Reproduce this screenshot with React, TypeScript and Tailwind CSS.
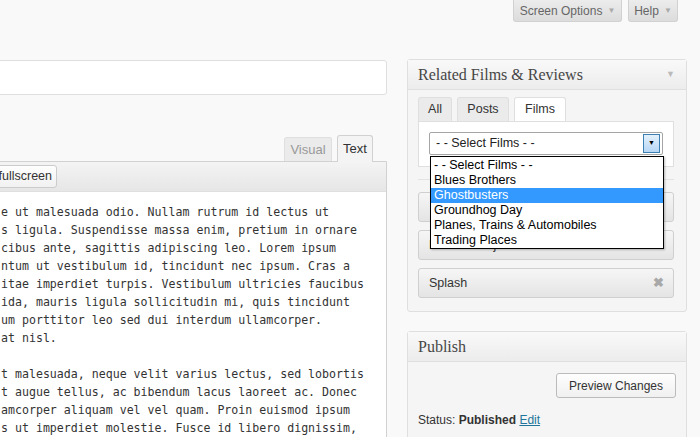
import type { ReactNode } from "react";

const bodyLines = [
  "e ut malesuada odio. Nullam rutrum id lectus ut",
  "s ligula. Suspendisse massa enim, pretium in ornare",
  "cibus ante, sagittis adipiscing leo. Lorem ipsum",
  "ntum ut vestibulum id, tincidunt nec ipsum. Cras a",
  "itae imperdiet turpis. Vestibulum ultricies faucibus",
  "ida, mauris ligula sollicitudin mi, quis tincidunt",
  "um porttitor leo sed dui interdum ullamcorper.",
  "at nisl.",
  "",
  "t malesuada, neque velit varius lectus, sed lobortis",
  "t augue tellus, ac bibendum lacus laoreet ac. Donec",
  "amcorper aliquam vel vel quam. Proin euismod ipsum",
  "s ut imperdiet molestie. Fusce id libero dignissim,",
];

const films = [
  "- - Select Films - -",
  "Blues Brothers",
  "Ghostbusters",
  "Groundhog Day",
  "Planes, Trains & Automobiles",
  "Trading Places",
];

function ScreenTab({ label, width }: { label: string; width: string }) {
  return (
    <button
      type="button"
      className={`flex h-[22px] ${width} items-center justify-center gap-[5px] rounded-b-[3px] border border-t-0 border-[#d1d1d1] bg-gradient-to-b from-[#ececec] to-[#dcdcdc] text-[12px] text-[#666]`}
    >
      {label}
      <span className="text-[8px] text-[#aaa]">▼</span>
    </button>
  );
}

function PanelHeader({ title, arrow }: { title: string; arrow?: boolean }) {
  return (
    <div className="flex h-[30px] items-center justify-between border-b border-[#dfdfdf] bg-gradient-to-b from-[#f9f9f9] to-[#ececec] pl-[10px] pr-[11px]">
      <h3 className="font-['Liberation_Serif',Georgia,serif] text-[16px] text-[#464646]">{title}</h3>
      {arrow && <span className="text-[9px] text-[#bbb]">▼</span>}
    </div>
  );
}

function RelatedItem({ label }: { label?: ReactNode }) {
  return (
    <div className="flex h-[30px] items-center justify-between rounded-[3px] border border-[#cfcfcf] bg-gradient-to-b from-[#f6f6f6] to-[#e4e4e4] pl-[10px] pr-[9px] text-[12.5px] text-[#333]">
      <span>{label}</span>
      <span className="text-[13px] font-bold text-[#a8a8a8]">✖</span>
    </div>
  );
}

function Cursor() {
  return (
    <svg width="14" height="21" viewBox="0 0 14 21" className="absolute left-[641px] top-[200px]">
      <path
        d="M1 1 L1 16 L4.5 12.5 L7.5 19 L9.5 18 L6.6 11.6 L11.5 11.6 Z"
        fill="#fff"
        stroke="#000"
        strokeWidth="1"
      />
    </svg>
  );
}

export default function App() {
  return (
    <div className="relative h-[437px] w-[700px] overflow-hidden bg-[#f9f9f9] font-['Liberation_Sans',Arial,sans-serif] text-[12px] text-[#333]">
      <div className="flex justify-end gap-[6px] pr-[22px]">
        <ScreenTab label="Screen Options" width="w-[109px]" />
        <ScreenTab label="Help" width="w-[50px]" />
      </div>

      <div className="mt-[37px] flex gap-[20px]">
        {/* editor column, left edge runs off the page */}
        <div className="-ml-[10px] w-[397px] shrink-0">
          <div className="mt-[1px] h-[35px] rounded-[3px] border border-[#dfdfdf] bg-white" />

          <div className="mt-[40px] flex items-end justify-end gap-[5px] pr-[14px]">
            <div className="flex h-[24px] w-[48px] items-center justify-center rounded-t-[3px] border border-b-0 border-[#dfdfdf] bg-[#ebebeb] text-[13px] text-[#999]">
              Visual
            </div>
            <div className="relative -mb-px flex h-[27px] w-[36px] items-center justify-center rounded-t-[3px] border border-b-0 border-[#d1d1d1] bg-[#f4f4f4] text-[13px] text-[#333]">
              Text
            </div>
          </div>

          <div className="rounded-tl-[3px] border border-[#d1d1d1] bg-white">
            <div className="flex h-[30px] items-center border-b border-[#dfdfdf] bg-gradient-to-b from-[#f4f4f4] to-[#e6e6e6] pl-[2px]">
              <button
                type="button"
                className="flex h-[23px] w-[64px] items-center justify-end rounded-[3px] border border-[#cccccc] bg-gradient-to-b from-[#fefefe] to-[#f1f1f1] pr-[4px] text-[12.5px] text-[#333]"
              >
                fullscreen
              </button>
            </div>
            <div className="whitespace-pre pl-[10px] pt-[11px] font-['DejaVu_Sans_Mono','Liberation_Mono',monospace] text-[11.6px] leading-[18px] text-[#333]">
              {bodyLines.map((line, i) => (
                <div key={i} className="h-[18px]">
                  {line}
                </div>
              ))}
            </div>
          </div>
        </div>

        {/* sidebar */}
        <div className="w-[280px] shrink-0">
          <div className="rounded-[3px] border border-[#dfdfdf] bg-[#f5f5f5]">
            <PanelHeader title="Related Films & Reviews" arrow />
            <div className="pb-[13px] pl-[10px] pr-[12px] pt-[7px]">
              <div className="flex gap-[5px]">
                <div className="flex h-[24px] w-[34px] items-center justify-center rounded-t-[3px] border border-b-0 border-[#dfdfdf] bg-[#ebebeb] text-[12.5px]">
                  All
                </div>
                <div className="flex h-[24px] w-[52px] items-center justify-center rounded-t-[3px] border border-b-0 border-[#dfdfdf] bg-[#ebebeb] text-[12.5px]">
                  Posts
                </div>
                <div className="relative -mb-px flex h-[25px] w-[52px] items-center justify-center rounded-t-[3px] border border-b-0 border-[#dfdfdf] bg-white pb-px text-[12.5px]">
                  Films
                </div>
              </div>
              <div className="relative h-[46px] border border-[#dfdfdf] bg-white px-[10px] pt-[10px]">
                <div className="flex h-[23px] items-center justify-between rounded-[2px] border border-[#a5a5a5] bg-white pl-[6px] pr-[2px] text-[12.5px] text-[#222]">
                  <span>- - Select Films - -</span>
                  <span className="flex h-[19px] w-[17px] items-center justify-center border border-[#3c7fb1] bg-gradient-to-b from-[#e4f1fc] to-[#b6d6f5] text-[7px] text-black">
                    ▼
                  </span>
                </div>
                <ul className="absolute left-[11px] top-[34px] z-10 w-[234px] border border-black bg-white pt-px text-[12.5px] leading-[15px] text-black shadow-[1px_1px_2px_rgba(0,0,0,0.25)]">
                  {films.map((f) => (
                    <li
                      key={f}
                      className={`h-[15px] pl-[3px] ${f === "Ghostbusters" ? "bg-[#3399ff] text-white" : ""}`}
                    >
                      {f}
                    </li>
                  ))}
                </ul>
              </div>

              <div className="mt-[12px] border-t border-[#e3e3e3]" />

              <div className="mt-[12px] flex flex-col gap-[8px]">
                <RelatedItem />
                <RelatedItem label="Private Benjamin" />
                <RelatedItem label="Splash" />
              </div>
            </div>
          </div>

          <div className="mt-[19px] rounded-[3px] border border-[#dfdfdf] bg-[#f5f5f5]">
            <PanelHeader title="Publish" />
            <div className="px-[10px] pb-[20px] pt-[11px]">
              <div className="flex justify-end">
                <button
                  type="button"
                  className="h-[25px] w-[120px] rounded-[3px] border border-[#bbbbbb] bg-gradient-to-b from-[#fefefe] to-[#f0f0f0] text-[12px] text-[#333]"
                >
                  Preview Changes
                </button>
              </div>
              <p className="mt-[13px] text-[12px] text-[#333]">
                Status: <b>Published</b>{" "}
                <a href="#" className="text-[#21759b] underline">
                  Edit
                </a>
              </p>
            </div>
          </div>
        </div>
      </div>

      <Cursor />
    </div>
  );
}
